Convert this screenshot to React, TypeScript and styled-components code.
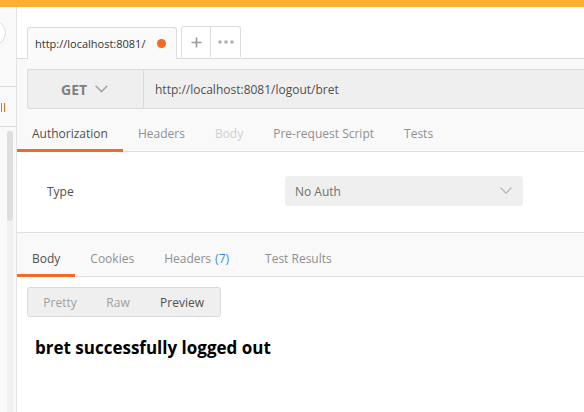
import React from "react";
import styled, { createGlobalStyle } from "styled-components";

const GlobalStyle = createGlobalStyle`
  html, body { margin: 0; padding: 0; overflow: hidden; }
  body { font-family: "Open Sans", "Noto Sans", sans-serif; background: #fff; }
  * { box-sizing: border-box; }
`;

const Shell = styled.div`
  width: 584px;
  height: 412px;
  display: flex;
  flex-direction: column;
  overflow: hidden;
`;

const TopStrip = styled.div`
  height: 7px;
  background: #fdb02f;
  flex: none;
`;

const Columns = styled.div`
  flex: 1;
  display: flex;
  min-height: 0;
`;

const Sidebar = styled.div`
  width: 16px;
  flex: none;
  background: #f9f9f9;
  display: flex;
  flex-direction: column;
  overflow: hidden;
`;

const SearchZone = styled.div`
  height: 80px;
  flex: none;
  border-bottom: 1px solid #dcdcdc;
  padding-top: 13px;
  overflow: hidden;
`;

const SearchRound = styled.div`
  width: 26px;
  height: 26px;
  margin-left: -20px;
  border-radius: 50%;
  border: 1px solid #dedede;
  background: #fff;
`;

const IconZone = styled.div`
  height: 40px;
  flex: none;
  border-bottom: 1px solid #dcdcdc;
  display: flex;
  align-items: center;
  padding-left: 1px;
`;

const Pause = styled.div`
  display: flex;
  gap: 2px;
  margin-top: 2px;
  span {
    display: block;
    width: 1px;
    height: 9px;
    background: #f26b21;
  }
`;

const ScrollZone = styled.div`
  flex: 1;
  display: flex;
  padding: 4px 0 0 7px;
`;

const ScrollTrack = styled.div`
  width: 6px;
  height: 100%;
  background: #f1f1f1;
  border-radius: 3px 3px 0 0;
`;

const ScrollThumb = styled.div`
  height: 90px;
  border-radius: 3px;
  background: #dedede;
`;

const Main = styled.div`
  flex: 1;
  display: flex;
  flex-direction: column;
  border-left: 1px solid #e4e4e4;
  box-shadow: inset 2px 0 2px -1px rgba(0, 0, 0, 0.08);
  min-width: 0;
`;

const TabStrip = styled.div`
  height: 52px;
  flex: none;
  background: #fff;
  border-bottom: 1px solid #dadada;
  display: flex;
  align-items: flex-end;
  padding-left: 10px;
  gap: 4px;
  margin-bottom: -1px;
`;

const RequestTab = styled.div`
  width: 150px;
  height: 32px;
  border: 1px solid #dcdcdc;
  border-bottom: none;
  border-radius: 3px 3px 0 0;
  background: #fafafa;
  display: flex;
  align-items: center;
  justify-content: space-between;
  padding: 0 10px 0 7px;
  font-size: 11px;
  color: #333;
  position: relative;
  top: 1px;
`;

const Dot = styled.span`
  width: 9px;
  height: 9px;
  border-radius: 50%;
  background: #f26b21;
`;

const TabButtons = styled.div`
  display: flex;
  height: 31px;
  border: 1px solid #dcdcdc;
  border-bottom: none;
  border-radius: 3px 3px 0 0;
  background: #fff;
  margin-bottom: 1px;
`;

const TabButton = styled.div<{ $divider?: boolean }>`
  width: 29px;
  display: flex;
  align-items: center;
  justify-content: center;
  border-right: ${(p) => (p.$divider ? "1px solid #dcdcdc" : "none")};
  color: #9a9a9a;
`;

const RequestSection = styled.div`
  background: #f9f9f9;
  border-top: 1px solid #dadada;
  flex: none;
  padding-top: 10px;
`;

const UrlBar = styled.div`
  margin-left: 10px;
  height: 40px;
  display: flex;
  background: #efefef;
  border: 1px solid #dadada;
  border-right: none;
  border-radius: 3px 0 0 3px;
`;

const MethodBox = styled.div`
  width: 116px;
  flex: none;
  border-right: 1px solid #dadada;
  display: flex;
  align-items: center;
  padding-left: 33px;
  gap: 8px;
  font-weight: 700;
  font-size: 14px;
  color: #808080;
`;

const UrlText = styled.div`
  display: flex;
  align-items: center;
  padding-left: 11px;
  font-size: 12px;
  color: #505050;
`;

const TabsRow = styled.div<{ $height: number }>`
  display: flex;
  height: ${(p) => p.$height}px;
  border-bottom: 1px solid #dedede;
`;

const TabItem = styled.div<{ $active?: boolean; $muted?: boolean; $lead?: number }>`
  display: flex;
  align-items: center;
  padding: 9px 15px 0 ${(p) => p.$lead ?? 15}px;
  font-size: 12px;
  color: ${(p) => (p.$active ? "#505050" : p.$muted ? "#cfcfcf" : "#909090")};
  border-bottom: 3px solid ${(p) => (p.$active ? "#f26b21" : "transparent")};
  margin-bottom: -1px;
  white-space: nowrap;
`;

const Count = styled.span`
  color: #2f8fea;
  margin-left: 4px;
`;

const AuthPanel = styled.div`
  background: #fff;
  height: 81px;
  flex: none;
  border-bottom: 1px solid #dedede;
  display: flex;
  align-items: center;
  padding: 0 0 2px 30px;
`;

const FieldLabel = styled.div`
  width: 238px;
  font-size: 12px;
  color: #505050;
`;

const Select = styled.div`
  width: 238px;
  height: 30px;
  border-radius: 3px;
  background: #efefef;
  display: flex;
  align-items: center;
  justify-content: space-between;
  padding: 0 11px 0 10px;
  font-size: 12px;
  color: #707070;
`;

const ResponseSection = styled.div`
  background: #f9f9f9;
  flex: none;
`;

const ResponseBody = styled.div`
  flex: 1;
  background: #fff;
  padding: 10px 0 0 10px;
`;

const Segmented = styled.div`
  display: inline-flex;
  height: 30px;
  border: 1px solid #dadada;
  border-radius: 3px;
  background: #efefef;
  align-items: center;
`;

const Segment = styled.div<{ $on?: boolean; $w: number }>`
  width: ${(p) => p.$w}px;
  text-align: center;
  font-size: 12px;
  color: ${(p) => (p.$on ? "#505050" : "#a0a0a0")};
`;

const Message = styled.h1`
  margin: 19px 0 0 8px;
  font-family: "Open Sans", sans-serif;
  font-weight: 700;
  font-size: 17px;
  color: #000;
`;

const Chevron = ({ size, color, width }: { size: number; color: string; width: number }) => (
  <svg width={size} height={size * 0.6} viewBox="0 0 12 7" fill="none">
    <path d="M0.6 0.6 L6 6 L11.4 0.6" stroke={color} strokeWidth={width} />
  </svg>
);

export default function App() {
  return (
    <>
      <GlobalStyle />
      <Shell>
        <TopStrip />
        <Columns>
          <Sidebar>
            <SearchZone>
              <SearchRound />
            </SearchZone>
            <IconZone>
              <Pause>
                <span />
                <span />
              </Pause>
            </IconZone>
            <ScrollZone>
              <ScrollTrack>
                <ScrollThumb />
              </ScrollTrack>
            </ScrollZone>
          </Sidebar>
          <Main>
            <TabStrip>
              <RequestTab>
                <span>http://localhost:8081/</span>
                <Dot />
              </RequestTab>
              <TabButtons>
                <TabButton $divider>
                  <svg width="11" height="11" viewBox="0 0 11 11">
                    <path d="M5.5 0.5v10M0.5 5.5h10" stroke="#9a9a9a" strokeWidth="1.6" />
                  </svg>
                </TabButton>
                <TabButton>
                  <svg width="16" height="4" viewBox="0 0 16 4">
                    <circle cx="2" cy="2" r="1.8" fill="#b0b0b0" />
                    <circle cx="8" cy="2" r="1.8" fill="#b0b0b0" />
                    <circle cx="14" cy="2" r="1.8" fill="#b0b0b0" />
                  </svg>
                </TabButton>
              </TabButtons>
            </TabStrip>
            <RequestSection>
              <UrlBar>
                <MethodBox>
                  <span>GET</span>
                  <Chevron size={13} color="#a8a8a8" width={1.5} />
                </MethodBox>
                <UrlText>http://localhost:8081/logout/bret</UrlText>
              </UrlBar>
              <TabsRow $height={43}>
                <TabItem $active>Authorization</TabItem>
                <TabItem>Headers</TabItem>
                <TabItem $muted>Body</TabItem>
                <TabItem>Pre-request Script</TabItem>
                <TabItem>Tests</TabItem>
              </TabsRow>
            </RequestSection>
            <AuthPanel>
              <FieldLabel>Type</FieldLabel>
              <Select>
                <span>No Auth</span>
                <Chevron size={12} color="#b0b0b0" width={1.2} />
              </Select>
            </AuthPanel>
            <ResponseSection>
              <TabsRow $height={44}>
                <TabItem $active>Body</TabItem>
                <TabItem>Cookies</TabItem>
                <TabItem>
                  Headers<Count>(7)</Count>
                </TabItem>
                <TabItem $lead={21}>Test Results</TabItem>
              </TabsRow>
            </ResponseSection>
            <ResponseBody>
              <Segmented>
                <Segment $w={64}>Pretty</Segment>
                <Segment $w={52}>Raw</Segment>
                <Segment $w={76} $on>
                  Preview
                </Segment>
              </Segmented>
              <Message>bret successfully logged out</Message>
            </ResponseBody>
          </Main>
        </Columns>
      </Shell>
    </>
  );
}
